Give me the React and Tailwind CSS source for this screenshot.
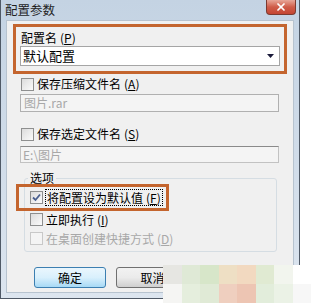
import { X } from "lucide-react";

const Check = ({ checked, disabled }) => (
  <span
    className={`flex h-[13px] w-[13px] shrink-0 items-center justify-center border ${
      disabled
        ? "border-[#c8c8c8] bg-[#f4f4f4]"
        : "border-[#8e8f8f] bg-gradient-to-br from-[#dcdcdc] to-[#fbfbfb]"
    }`}
  >
    {checked && (
      <svg width="9" height="9" viewBox="0 0 9 9">
        <path d="M1 4.5 L3.5 7 L8 1.5" fill="none" stroke="#4a5f8f" strokeWidth="1.8" />
      </svg>
    )}
  </span>
);

const Key = ({ k }) => (
  <span className="ml-[3px]">
    (<span className="underline underline-offset-1">{k}</span>)
  </span>
);

const mosaic = [
  ["#e6e6e2", "#dfe9d6", "#d7e6c9", "#eedfc4", "#f2d9c0", "#e0ead2", "#f2f5ee", "#ffffff"],
  ["#f5f5f3", "#e5eedd", "#e0ead6", "#efcfbf", "#edc5b3", "#e2eddb", "#ebf2e6", "#f7f7f7"],
];

export default function App() {
  return (
    <div className="relative h-[303px] w-[311px] overflow-hidden whitespace-nowrap bg-white font-['Noto_Sans_CJK_SC','Noto_Sans',sans-serif] text-[12px] text-black">
      <div className="flex h-[299px] w-[300px] flex-col border-x border-b border-[#4f5966] bg-gradient-to-b from-[#c4d3e3] to-[#dce5ef]">
        <div className="flex h-[20px] shrink-0 items-start justify-between">
          <span className="pl-[4px] pt-[1px] text-[12.5px] leading-[17px] text-[#1e1e1e]">配置参数</span>
          <span className="mr-[3px] flex h-[15px] w-[30px] items-center justify-center rounded-b-[4px] border border-t-0 border-[#7c3a30] bg-gradient-to-b from-[#e7a698] via-[#cf5c49] to-[#c44632]">
            <X size={12} strokeWidth={3.5} className="text-white" />
          </span>
        </div>
        <div className="mx-[5px] mb-[5px] flex flex-1 flex-col border border-[#b7c3cf] bg-[#f0f0f0]">
          <div className="ml-[6px] mt-[3px] flex h-[50px] w-[274px] flex-col border-[3px] border-[#c4652e] px-[4px]">
            <div className="h-[19px] pl-[1px] pt-[3px] leading-[15px]">
              配置名<Key k="P" />
            </div>
            <div className="flex h-[20px] items-center justify-between border border-[#a5a5a5] bg-white pl-[2px] pr-[5px]">
              <span className="text-[13px] leading-[16px]">默认配置</span>
              <svg width="7" height="4" viewBox="0 0 7 4">
                <path d="M0 0 H7 L3.5 4 Z" fill="#1a1a3a" />
              </svg>
            </div>
          </div>

          <div className="ml-[14px] flex h-[20px] items-center gap-[3px]">
            <Check />
            <span className="leading-[16px]">
              保存压缩文件名<Key k="A" />
            </span>
          </div>
          <div className="ml-[13px] flex h-[18px] w-[259px] items-center border border-[#b0b0b0] bg-[#f4f4f4] pl-[3px] text-[#a8a8a8]">
            <span className="leading-[14px]">图片.rar</span>
          </div>

          <div className="ml-[14px] mt-[12px] flex h-[20px] items-center gap-[3px]">
            <Check />
            <span className="leading-[16px]">
              保存选定文件名<Key k="S" />
            </span>
          </div>
          <div className="ml-[13px] mt-[2px] flex h-[17px] w-[259px] items-center border border-[#c2c2c2] border-t-[#8a8a8a] bg-[#f4f4f4] pl-[2px] text-[#a8a8a8]">
            <span className="leading-[14px]">E:\图片</span>
          </div>

          <fieldset className="ml-[17px] mt-[9px] w-[253px] rounded-[3px] border border-[#d5dde3] pb-[5px]">
            <legend className="ml-[3px] px-[2px] leading-[12px]">选项</legend>
            <div className="-ml-[9px] flex h-[27px] w-[153px] items-center border-[3px] border-[#c4652e] pl-[11px]">
              <Check checked />
              <span className="ml-[2px] border border-dotted border-black px-[1px] leading-[15px]">
                将配置设为默认值<Key k="F" />
              </span>
            </div>
            <div className="ml-[5px] flex h-[16px] items-center gap-[3px]">
              <Check />
              <span className="leading-[15px]">
                立即执行<Key k="I" />
              </span>
            </div>
            <div className="ml-[5px] mt-[3px] flex h-[16px] items-center gap-[3px] text-[#a8a8a8]">
              <Check disabled />
              <span className="leading-[15px]">
                在桌面创建快捷方式<Key k="D" />
              </span>
            </div>
          </fieldset>

          <div className="ml-[27px] mt-[15px] flex gap-[10px]">
            <button className="flex h-[21px] w-[72px] items-center justify-center rounded-[3px] border border-[#3c7fb1] bg-gradient-to-b from-[#eaf6fd] via-[#d9f0fc] to-[#a7d9f5] leading-[15px]">
              确定
            </button>
            <button className="flex h-[21px] w-[73px] items-center justify-center rounded-[3px] border border-[#707070] bg-gradient-to-b from-[#f2f2f2] via-[#ebebeb] to-[#cfcfcf] leading-[15px]">
              取消
            </button>
          </div>
        </div>
      </div>

      <div className="absolute left-[163px] top-[265px] grid grid-cols-[repeat(8,18.5px)] grid-rows-[19px_19px]">
        {mosaic.flat().map((c, i) => (
          <div key={i} style={{ background: c }} />
        ))}
      </div>
    </div>
  );
}
